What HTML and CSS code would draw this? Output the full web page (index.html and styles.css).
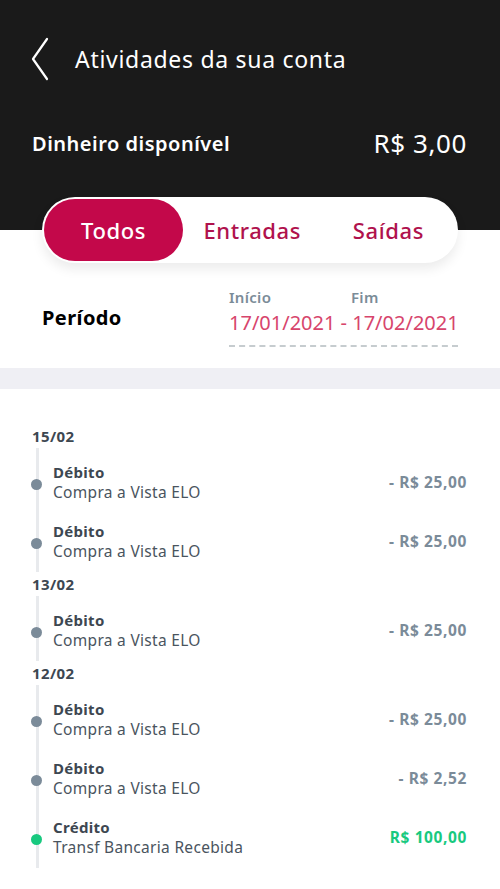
FILE: index.html
```html
<!DOCTYPE html>
<html lang="pt-BR">
<head>
    <meta charset="UTF-8">
    <meta name="viewport" content="width=device-width, initial-scale=1.0">
    <title>Atividades da sua conta</title>
    <link rel="stylesheet" href="styles.css">
</head>
<body>
    <header class="top">
        <div class="title-row">
            <svg class="back" width="20" height="44" viewBox="0 0 20 44">
                <polyline points="17,2 3,22 17,42" fill="none" stroke="#fff" stroke-width="2.2" stroke-linecap="round" stroke-linejoin="round"/>
            </svg>
            <h1>Atividades da sua conta</h1>
        </div>
        <div class="balance">
            <span class="balance-label">Dinheiro disponível</span>
            <span class="balance-value">R$ 3,00</span>
        </div>
    </header>

    <div class="tabs-wrap">
        <div class="tabs">
            <div class="tab active">Todos</div>
            <div class="tab middle">Entradas</div>
            <div class="tab last">Saídas</div>
        </div>
    </div>

    <section class="period">
        <div class="period-label">Período</div>
        <div class="period-dates">
            <div class="period-heads">
                <span class="head-start">Início</span>
                <span>Fim</span>
            </div>
            <div class="period-range">17/01/2021 - 17/02/2021</div>
        </div>
    </section>

    <div class="band"></div>

    <main class="list">
        <div class="day">15/02</div>
        <div class="group">
            <div class="item">
                <span class="dot"></span>
                <div class="info"><div class="kind">Débito</div><div class="desc">Compra a Vista ELO</div></div>
                <div class="amount">- R$ 25,00</div>
            </div>
            <div class="item">
                <span class="dot"></span>
                <div class="info"><div class="kind">Débito</div><div class="desc">Compra a Vista ELO</div></div>
                <div class="amount">- R$ 25,00</div>
            </div>
        </div>

        <div class="day">13/02</div>
        <div class="group">
            <div class="item">
                <span class="dot"></span>
                <div class="info"><div class="kind">Débito</div><div class="desc">Compra a Vista ELO</div></div>
                <div class="amount">- R$ 25,00</div>
            </div>
        </div>

        <div class="day">12/02</div>
        <div class="group">
            <div class="item">
                <span class="dot"></span>
                <div class="info"><div class="kind">Débito</div><div class="desc">Compra a Vista ELO</div></div>
                <div class="amount">- R$ 25,00</div>
            </div>
            <div class="item">
                <span class="dot"></span>
                <div class="info"><div class="kind">Débito</div><div class="desc">Compra a Vista ELO</div></div>
                <div class="amount">- R$ 2,52</div>
            </div>
            <div class="item">
                <span class="dot credit"></span>
                <div class="info"><div class="kind">Crédito</div><div class="desc">Transf Bancaria Recebida</div></div>
                <div class="amount credit">R$ 100,00</div>
            </div>
        </div>
    </main>
</body>
</html>
```

FILE: styles.css
```css
body {
    margin: 0;
    font-family: "Noto Sans", "Open Sans", sans-serif;
    background: #fff;
    color: #3d4751;
}
.top {
    background: #1a1a1a;
    color: #fff;
    height: 230px;
    padding: 0 33px 0 30px;
    box-sizing: border-box;
}
.title-row {
    display: flex;
    align-items: center;
    padding-top: 37px;
    height: 44px;
}
.back {
    display: block;
    margin-right: 25px;
}
h1 {
    margin: 0;
    font-size: 23px;
    font-weight: 400;
    letter-spacing: 0.7px;
}
.balance {
    display: flex;
    justify-content: space-between;
    align-items: center;
    margin-top: 44px;
    padding-left: 2px;
}
.balance-label {
    font-size: 20px;
    font-weight: 600;
    letter-spacing: 0.5px;
}
.balance-value {
    font-size: 26px;
    letter-spacing: 0.6px;
}
.tabs-wrap {
    margin-top: -33px;
    padding: 0 42px;
}
.tabs {
    display: flex;
    background: #fff;
    border-radius: 33px;
    height: 66px;
    padding: 2px;
    box-sizing: border-box;
    box-shadow: 0 6px 12px rgba(0,0,0,0.08);
}
.tab {
    flex: 1;
    display: flex;
    align-items: center;
    justify-content: center;
    font-size: 22px;
    font-weight: 500;
    letter-spacing: 0.6px;
    color: #b0124d;
    border-radius: 31px;
}
.tab.active {
    flex: 0 0 139px;
    background: #c3084a;
    color: #fff;
}
.tab.middle {
    padding-left: 12px;
}
.tab.last {
    justify-content: flex-end;
    padding-right: 32px;
}
.period {
    display: flex;
    align-items: center;
    padding: 24px 42px 21px;
}
.period-label {
    flex: 0 0 187px;
    font-size: 20px;
    font-weight: 700;
    letter-spacing: 0.4px;
    color: #000;
    margin-top: 1px;
}
.period-dates {
    width: 229px;
}
.period-heads {
    display: flex;
    font-size: 15px;
    font-weight: 600;
    letter-spacing: 0.3px;
    color: #7b8c98;
    margin-bottom: 2px;
}
.head-start {
    width: 122px;
}
.period-range {
    font-size: 20px;
    white-space: nowrap;
    color: #d7456c;
    padding-bottom: 9px;
    border-bottom: 2px dashed #c6cccf;
}
.band {
    height: 21px;
    background: #efeff4;
}
.list {
    padding: 35px 33px 20px 32px;
}
.day {
    font-size: 15px;
    font-weight: 700;
    letter-spacing: 0.4px;
    color: #3d4751;
    height: 24px;
    line-height: 24px;
}
.group {
    border-left: 3px solid #e8eaed;
    margin-left: 4px;
    padding: 4px 0 2px;
}
.item {
    display: flex;
    align-items: center;
    height: 59px;
    position: relative;
}
.dot {
    position: absolute;
    left: -8px;
    top: 27px;
    width: 11px;
    height: 11px;
    border-radius: 50%;
    background: #7b8b99;
}
.dot.credit {
    background: #18c97f;
}
.info {
    flex: 1;
    padding-left: 14px;
}
.kind {
    font-size: 15px;
    font-weight: 700;
    letter-spacing: 0.3px;
    color: #3d4751;
    line-height: 20px;
}
.desc {
    font-size: 15.5px;
    letter-spacing: 0.3px;
    color: #4a545e;
    line-height: 20px;
}
.amount {
    font-size: 15.5px;
    font-weight: 700;
    letter-spacing: 0.6px;
    color: #7b8b99;
}
.amount.credit {
    color: #18c97f;
}
```
